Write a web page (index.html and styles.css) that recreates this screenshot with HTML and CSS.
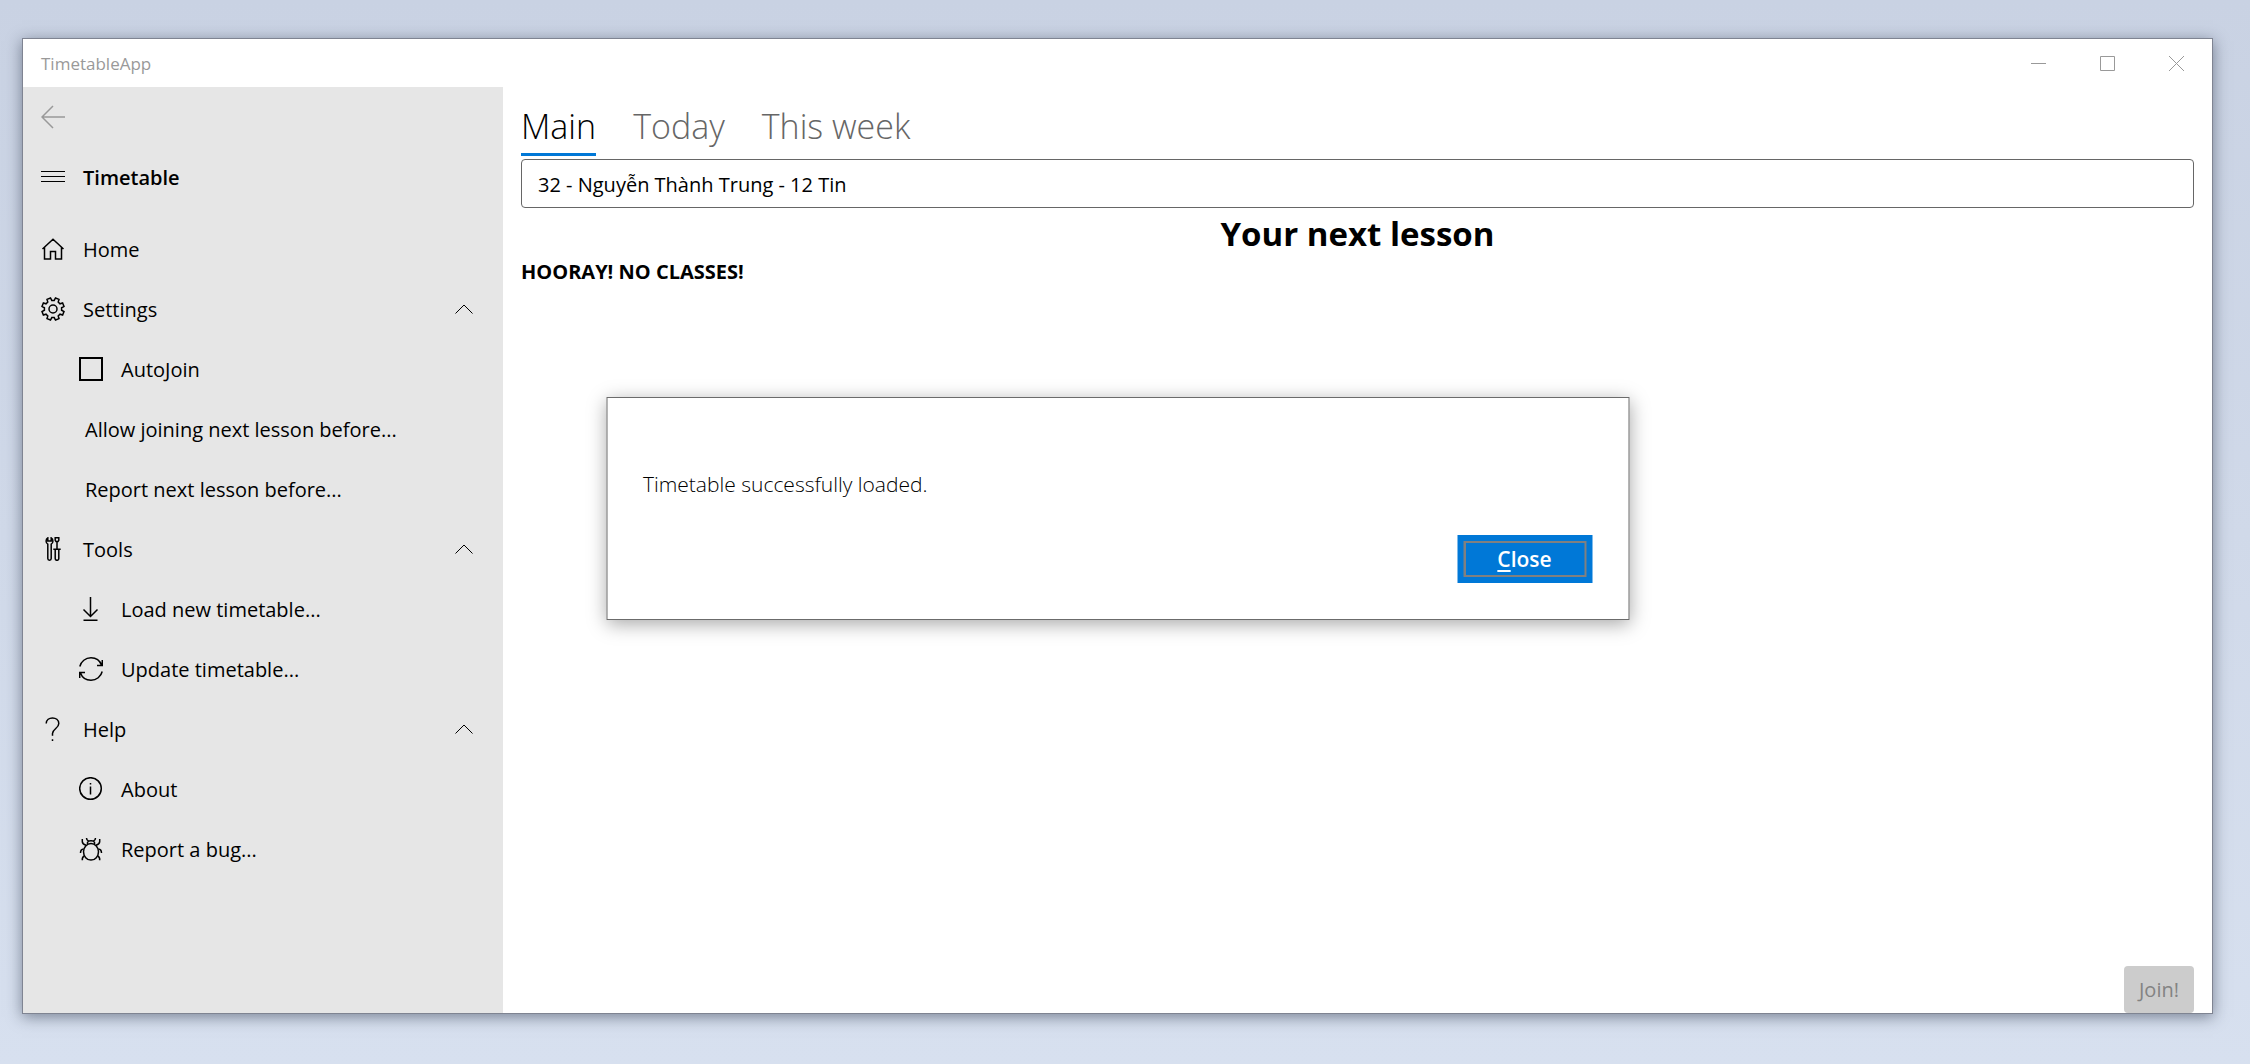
FILE: index.html
```html
<!DOCTYPE html>
<html lang="en">
<head>
<meta charset="utf-8">
<meta name="viewport" content="width=device-width, initial-scale=1">
<title>TimetableApp</title>
<link rel="stylesheet" href="styles.css">
</head>
<body>
<div class="window">
  <header class="titlebar">
    <span class="app-name">TimetableApp</span>
    <div class="caption">
      <button type="button" aria-label="Minimize"><svg viewBox="0 0 15 15"><path d="M0 7.5h15"/></svg></button>
      <button type="button" aria-label="Maximize"><svg viewBox="0 0 15 15"><path d="M.5.5h14v14H.5z"/></svg></button>
      <button type="button" aria-label="Close window"><svg viewBox="0 0 15 15"><path d="M0 0l15 15M15 0L0 15"/></svg></button>
    </div>
  </header>
  <div class="body">
    <nav class="sidebar" aria-label="Timetable">
      <button type="button" class="row back" aria-label="Back" disabled>
        <svg class="icon" viewBox="0 0 24 24"><path d="M24 12H1M12 1L1 12l11 11"/></svg>
      </button>
      <button type="button" class="row brand">
        <svg class="icon" viewBox="0 0 24 24"><path d="M0 6.5h24M0 11.5h24M0 16.5h24"/></svg>
        <span>Timetable</span>
      </button>
      <ul class="menu">
        <li><a class="row" href="#home">
          <svg class="icon" viewBox="0 0 24 24"><path d="M1.5 12L12 2.3 22.5 12M3.5 10.5V22h6v-7.500h5V22h6V10.500"/></svg>
          <span>Home</span></a></li>
        <li>
          <button type="button" class="row" aria-expanded="true">
            <svg class="icon" viewBox="0 0 24 24"><path d="M10.800 3.400L13.200 3.400 14.500 1 18 2.400 17.200 5 19 6.800 21.600 6 23 9.500 20.600 10.800 20.600 13.200 23 14.500 21.600 18 19 17.200 17.200 19 18 21.600 14.500 23 13.200 20.600 10.800 20.600 9.500 23 6 21.600 6.800 19 5 17.200 2.400 18 1 14.500 3.400 13.200 3.400 10.800 1 9.500 2.400 6 5 6.800 6.800 5 6 2.400 9.500 1z"/><circle cx="12" cy="12" r="4"/></svg>
            <span>Settings</span>
            <svg class="chevron" viewBox="0 0 18 10"><path d="M.5 9.500L9 1l8.500 8.500"/></svg>
          </button>
          <ul class="submenu">
            <li><label class="row"><input type="checkbox"><span>AutoJoin</span></label></li>
            <li><button type="button" class="row plain"><span>Allow joining next lesson before...</span></button></li>
            <li><button type="button" class="row plain"><span>Report next lesson before...</span></button></li>
          </ul>
        </li>
        <li>
          <button type="button" class="row" aria-expanded="true">
            <svg class="icon" viewBox="0 0 24 24"><path d="M6.800.9C4.400 2.500 4.700 6 6.800 7.200v14.300a1.700 1.700 0 0 0 3.400 0V7.200c2.100-1.200 2.400-4.700 0-6.300V4H6.800zM14.200.8h3.600v2.500l-.8 1.200h-2l-.8-1.200zM16 4.500v7.500M12.300 12.300h7.400M14.200 12.500v9a1.800 1.800 0 0 0 3.600 0v-9"/></svg>
            <span>Tools</span>
            <svg class="chevron" viewBox="0 0 18 10"><path d="M.5 9.500L9 1l8.500 8.500"/></svg>
          </button>
          <ul class="submenu">
            <li><button type="button" class="row">
              <svg class="icon" viewBox="0 0 24 24"><path d="M11.500 0v19M4.500 12.500l7 7 7-7M4.500 23.200h14"/></svg>
              <span>Load new timetable...</span></button></li>
            <li><button type="button" class="row">
              <svg class="icon" viewBox="0 0 24 24"><path d="M.8 9.500C2 4.500 6.500.8 12 .8c4.800 0 9 3 10.600 7.500M23.300 3v5.500H18M23.200 14.500C22 19.500 17.500 23.200 12 23.200c-4.800 0-9-3-10.600-7.500M.7 21v-5.500H6"/></svg>
              <span>Update timetable...</span></button></li>
          </ul>
        </li>
        <li>
          <button type="button" class="row" aria-expanded="true">
            <svg class="icon" viewBox="0 0 24 24"><path d="M5.200 6.500c0-7.500 12.600-7.500 12.600 0 0 5-6.300 5.500-6.300 10v2.300M11.500 22.300V24"/></svg>
            <span>Help</span>
            <svg class="chevron" viewBox="0 0 18 10"><path d="M.5 9.500L9 1l8.500 8.500"/></svg>
          </button>
          <ul class="submenu">
            <li><button type="button" class="row">
              <svg class="icon" viewBox="0 0 24 24"><circle cx="11.500" cy="11.500" r="10.800"/><path d="M11.500 9.500v8M11.500 6v1.600"/></svg>
              <span>About</span></button></li>
            <li><button type="button" class="row">
              <svg class="icon" viewBox="0 0 24 24"><ellipse cx="12" cy="14.800" rx="7.500" ry="8.300"/><path d="M8.500 7.300V5.500c0-2.500 7-2.500 7 0v1.800M7.500 1c0 1.500.6 2.500 2 3M16.500 1c0 1.500-.6 2.500-2 3M3.300 2v2.500c0 2 1.500 3 3.700 3.700M20.700 2v2.500c0 2-1.500 3-3.700 3.700M1.500 16c0-2.800 1-3.800 3.200-4M22.500 16c0-2.800-1-3.800-3.200-4M3.300 23.300c-.2-2 .4-3.500 2-4.300M20.700 23.300c.2-2-.4-3.500-2-4.300"/></svg>
              <span>Report a bug...</span></button></li>
          </ul>
        </li>
      </ul>
    </nav>
    <main class="content">
      <div class="tabs" role="tablist">
        <button type="button" class="tab active" role="tab" aria-selected="true">Main</button>
        <button type="button" class="tab" role="tab" aria-selected="false">Today</button>
        <button type="button" class="tab" role="tab" aria-selected="false">This week</button>
      </div>
      <input class="student" type="text" aria-label="Student" value="32 - Nguyễn Thành Trung - 12 Tin">
      <h1>Your next lesson</h1>
      <p class="status">HOORAY! NO CLASSES!</p>
      <button type="button" class="join" disabled>Join!</button>
    </main>
  </div>
  <div class="dialog" role="dialog" aria-labelledby="message">
    <p id="message">Timetable successfully loaded.</p>
    <button type="button" class="close"><span><u>C</u>lose</span></button>
  </div>
</div>
</body>
</html>
```

FILE: styles.css
```css
* { box-sizing: border-box; }

body {
  margin: 0;
  min-height: 100vh;
  display: flex;
  padding: 38px 37px 50px 22px;
  background: linear-gradient(#c9d2e3, #d7e0ef);
  font: 20px/28px "Open Sans", "Noto Sans", sans-serif;
  color: #000;
}

button, input { font: inherit; color: inherit; }
button { border: 0; padding: 0; background: none; }
ul { list-style: none; margin: 0; padding: 0; }
svg { fill: none; stroke: currentColor; }

.window {
  position: relative;
  flex: 1;
  display: flex;
  flex-direction: column;
  background: #fff;
  border: 1px solid #7f8492;
  box-shadow: 0 3px 14px rgba(30, 40, 60, .5);
}

/* Title bar */
.titlebar {
  display: flex;
  justify-content: space-between;
  height: 48px;
  padding-right: 1px;
  color: #999;
}
.app-name { padding-left: 18px; font-size: 17px; line-height: 50px; }
.caption { display: flex; }
.caption button { display: grid; place-items: center; width: 69px; }
.caption svg { width: 15px; height: 15px; }

.body { flex: 1; display: flex; }

/* Sidebar */
.sidebar { flex: 0 0 480px; background: #e6e6e6; }
.row {
  display: flex;
  align-items: center;
  gap: 18px;
  width: 100%;
  height: 60px;
  padding: 0 30px 0 18px;
  color: inherit;
  text-align: left;
  text-decoration: none;
}
.row span { padding-top: 2px; }
.icon { width: 24px; height: 24px; stroke-width: 1.5; }
.back { color: #999; }
.brand { font-weight: 600; }
.brand .icon { stroke-width: 1; }
.menu { padding-top: 12px; }
.chevron { width: 18px; height: 10px; margin-left: auto; }
.submenu .row { padding-left: 56px; }
.submenu .plain { padding-left: 62px; }
.row input {
  appearance: none;
  width: 24px;
  height: 24px;
  margin: 0;
  border: 2px solid #000;
}

/* Main pane */
.content {
  flex: 1;
  display: flex;
  flex-direction: column;
  padding: 0 18px;
}
.tabs { display: flex; gap: 37px; height: 72px; padding-top: 12px; }
.tab {
  height: 57px;
  font-size: 34px;
  font-weight: 300;
  line-height: 52px;
  color: #666;
  border-bottom: 3px solid transparent;
}
.tab.active { color: #000; border-color: #0078d7; }
.student {
  width: 100%;
  height: 49px;
  padding: 2px 16px 0;
  border: 1px solid #666;
  border-radius: 4px;
  background: #fff;
}
h1 { margin: 2px 0 0; font-size: 33px; font-weight: 700; line-height: 48px; text-align: center; }
.status { margin: 0; font-weight: 700; }
.join {
  align-self: flex-end;
  margin-top: auto;
  width: 70px;
  height: 47px;
  border-radius: 4px;
  background: #ccc;
  color: #838383;
}

/* Message box */
.dialog {
  position: absolute;
  top: 358px;
  left: 50%;
  transform: translateX(-50%);
  width: min(1023px, 90%);
  display: flex;
  flex-direction: column;
  gap: 36px;
  padding: 71px 36px 36px;
  background: #fff;
  border: 1px solid #6b6b6b;
  box-shadow: 0 4px 18px rgba(0, 0, 0, .35);
}
.dialog p { margin: 0; font-size: 21px; font-weight: 300; line-height: 30px; }
.close {
  align-self: flex-end;
  display: flex;
  width: 135px;
  height: 48px;
  padding: 6px;
  background: #0078d7;
  color: #fff;
  font-size: 21px;
  font-weight: 600;
}
.close span {
  flex: 1;
  line-height: 32px;
  border: 2px solid transparent;
  background:
    linear-gradient(#0078d7, #0078d7) padding-box,
    repeating-conic-gradient(#fff 0 25%, #000 0 50%) 0 0 / 2px 2px border-box;
}
.close u { text-underline-offset: 3px; }
```
